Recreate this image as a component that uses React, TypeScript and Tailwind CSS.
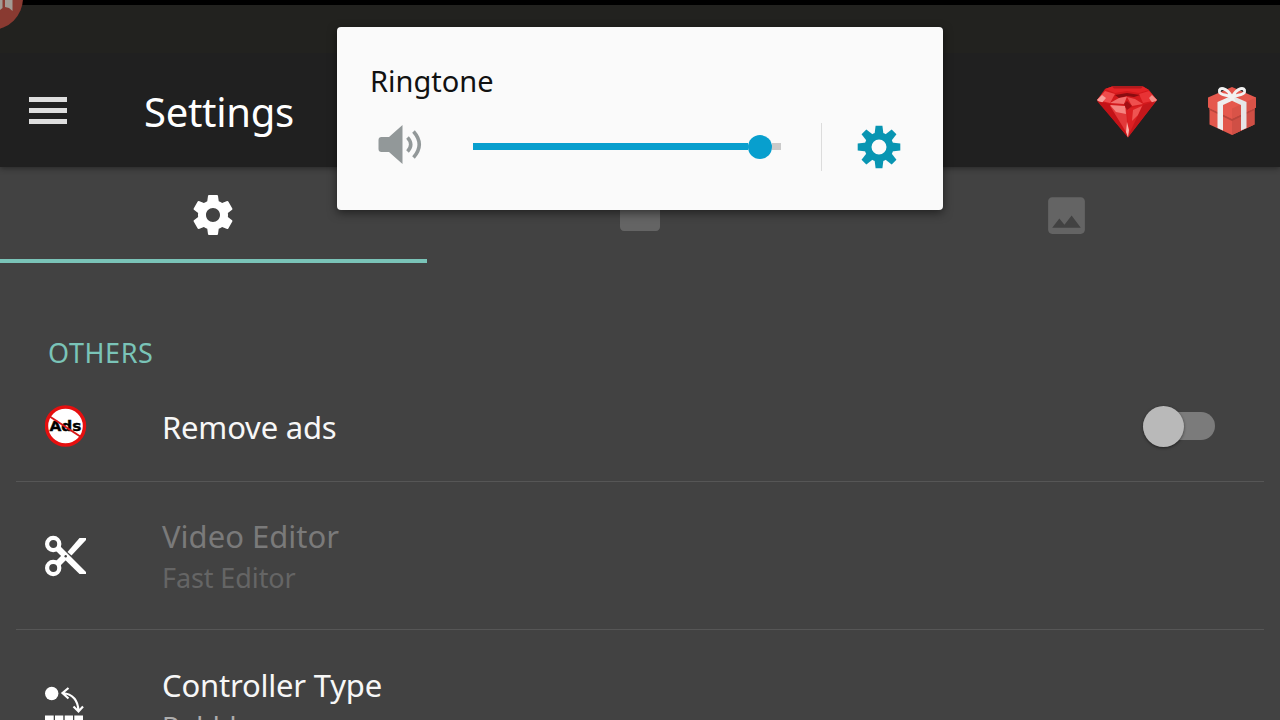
import { FC, ReactNode } from "react";
import { MdFolder, MdImage } from "react-icons/md";

const RubyIcon: FC = () => (
  <svg width="60" height="52" viewBox="0 0 60 52">
    <path d="M8 3 15 0.500H46L52 4 60 14 31 51.500 0 14Z" fill="#d3191c" />
    <path d="M8 3 15 0.500H46L52 4 42 7 30 5 18 7Z" fill="#e32326" />
    <path d="M15 0.500H46L44 2.500H17Z" fill="#b3191b" />
    <path d="M0 14 8 5 18 8 13 17Z" fill="#ef4c4c" />
    <path d="M0 14 5 9 9 12 4 18Z" fill="#f7a09b" />
    <path d="M60 14 52 5 42 8 46 17Z" fill="#e83335" />
    <path d="M60 14 55 9 52 12 56 18Z" fill="#f58d88" />
    <path d="M18 9 30 7 43 9 37 11 30 10 22 12Z" fill="#8a0c10" />
    <path d="M13 17 22 12 30 10.500 27 18Z" fill="#f36e6c" />
    <path d="M30 11 38 13 46 18 35 20Z" fill="#ef4f4e" />
    <path d="M0 15 13 18 31 51Z" fill="#c31217" />
    <path d="M13 20 29 22 31 49Z" fill="#e2393a" />
    <path d="M13 19 28 20 29 28 19 26Z" fill="#f58480" />
    <path d="M30 23 46 19 31 50Z" fill="#dc2023" />
    <path d="M36 24 45 20 41 29 35 35Z" fill="#ef5452" />
    <path d="M46 19 59 15 31 51Z" fill="#c4171b" />
    <path d="M27 18 30 15 35 20 30 24Z" fill="#a20e13" />
    <path d="M30 36 32 44 31 51.500 29 46Z" fill="#fcb2aa" />
  </svg>
);

const GiftIcon: FC = () => (
  <svg width="48" height="50" viewBox="0 0 48 50">
    <path d="M1.500 18H46.500V38.500L24 49 1.500 38.500Z" fill="#e2574c" />
    <path d="M24 30 46.500 19V38.500L24 49Z" fill="#cf4f45" />
    <path d="M1.500 22 24 33 46.500 22V24L24 35 1.500 24Z" fill="#b9453c" />
    <path d="M24 1 48 11.500V21.500L24 32.500 0 21.500V11.500Z" fill="#e5584d" />
    <path d="M24 22.500 48 11.500V21.500L24 32.500Z" fill="#d95348" />
    <path d="M9.500 16 23 10 29 12.500 15 19V44.500L9.500 42Z" fill="#eeeeee" />
    <path d="M38.500 16 25 10 19 12.500 33 19V44.500L38.500 42Z" fill="#e6e6e6" />
    <path
      d="M24 11.500C19 1 10.500 0.500 11.500 6 12.500 10 19 8 24 11.500ZM24 11.500C29 1 37.500 0.500 36.500 6 35.500 10 29 8 24 11.500Z"
      fill="none"
      stroke="#f2f2f2"
      strokeWidth="3"
    />
  </svg>
);

const NoAdsIcon: FC = () => (
  <svg width="42" height="42" viewBox="0 0 42 42">
    <circle cx="20.500" cy="21" r="19" fill="#fff" stroke="#e60f0f" strokeWidth="3.400" />
    <text
      x="20.500"
      y="26"
      textAnchor="middle"
      textLength="32"
      lengthAdjust="spacingAndGlyphs"
      fontSize="14"
      fontWeight="bold"
      fontFamily="'DejaVu Sans', sans-serif"
      fill="#000"
      stroke="#000"
      strokeWidth="0.400"
    >
      Ads
    </text>
    <path d="M4 11 36 32" stroke="#d81616" strokeWidth="2" />
  </svg>
);

const ScissorsIcon: FC = () => (
  <svg width="42" height="42" viewBox="0 0 42 42" fill="#fff">
    <g fill="none" stroke="#fff" strokeWidth="4.200">
      <circle cx="8.200" cy="9" r="6.100" />
      <circle cx="8.200" cy="33" r="6.100" />
    </g>
    <path d="M10.500 15.500 15 11 41 37V39H34.500Z" />
    <path d="M10.500 26.500 17.500 19.500 22 24 15 31Z" />
    <path d="M22.500 17 34.500 3H41V5L26.500 20.500Z" />
    <circle cx="20.700" cy="21.200" r="1.200" fill="#424242" />
  </svg>
);

const ControllerIcon: FC = () => (
  <svg width="40" height="48" viewBox="0 0 40 48">
    <circle cx="6.700" cy="7.500" r="6.700" fill="#fff" />
    <path
      d="M17.500 7C27 8 33 14 33.500 25M23.500 2 17.500 7 23.500 12.500M28.500 20.500 33.500 25.500 38 20.500"
      fill="none"
      stroke="#fff"
      strokeWidth="2.200"
    />
    <path d="M0 29.500H8.700V40H0ZM10 29.500H18.300V40H10ZM19.700 29.500H28V40H19.700ZM29.300 29.500H38V40H29.300Z" fill="#fff" />
  </svg>
);

const SpeakerIcon: FC = () => (
  <svg width="44" height="40" viewBox="0 0 44 40">
    <path d="M3.500 12H11L24.500 0V39L11 27H3.500Q0.500 27 0.500 24V15Q0.500 12 3.500 12Z" fill="#929899" />
    <path
      d="M29.500 12.500Q36 19.500 29.500 26.500M35.500 6.500Q47 19.500 35.500 32.500"
      fill="none"
      stroke="#929899"
      strokeWidth="3.500"
    />
  </svg>
);

const SettingsIcon: FC = () => (
  <svg width="48" height="48" viewBox="0 0 24 24" fill="currentColor">
    <path d="M19.43 12.98c.04-.32.07-.64.07-.98s-.03-.66-.07-.98l2.110-1.650c.19-.15.24-.42.12-.64l-2-3.460c-.12-.22-.39-.3-.61-.22l-2.490 1c-.52-.4-1.080-.73-1.690-.98l-.38-2.650C14.460 2.180 14.250 2 14 2h-4c-.25 0-.46.18-.49.42l-.38 2.650c-.61.25-1.170.59-1.690.98l-2.490-1c-.23-.09-.49 0-.61.22l-2 3.460c-.13.22-.07.49.12.64l2.110 1.650c-.04.32-.07.65-.07.98s.03.66.07.98l-2.110 1.650c-.19.15-.24.42-.12.64l2 3.460c.12.22.39.3.61.22l2.490-1c.52.4 1.080.73 1.690.98l.38 2.650c.03.24.24.42.49.42h4c.25 0 .46-.18.49-.42l.38-2.650c.61-.25 1.170-.59 1.690-.98l2.490 1c.23.09.49 0 .61-.22l2-3.460c.12-.22.07-.49-.12-.64l-2.110-1.650zM12 15.500c-1.930 0-3.500-1.570-3.500-3.500s1.570-3.500 3.500-3.500 3.500 1.570 3.500 3.500-1.570 3.500-3.500 3.500z" />
  </svg>
);

const teeth = [0, 45, 90, 135, 180, 225, 270, 315];

const CogIcon: FC = () => (
  <svg width="44" height="44" viewBox="-22 -22 44 44" fill="#0895b2">
    <circle r="11" fill="none" stroke="#0895b2" strokeWidth="7" />
    {teeth.map((angle) => (
      <path key={angle} d="M-4.500 -12.500 -3.400 -21.300H3.400L4.500 -12.500Z" transform={`rotate(${angle})`} />
    ))}
  </svg>
);

const Header: FC = () => (
  <header className="relative z-10 h-[167px] border-t-5 border-black bg-[linear-gradient(#22221f_48px,#202020_48px)] shadow-[0_1px_6px_rgba(0,0,0,0.45)]">
    {/* floating record button, mostly off screen */}
    <div className="absolute -top-[39px] -left-[41px] size-16 rounded-full bg-[#893a31]" />
    <svg className="absolute -top-[5px] left-0" width="16" height="12" viewBox="0 0 16 12">
      <path d="M0 0H2.500V8L0 10ZM5 0H12.500V11L9 8 5 7Z" fill="#a29b94" />
    </svg>
    <div className="flex h-full items-center pt-[50px] pr-6 pl-[29px]">
      <div className="-mt-px flex w-[38px] flex-col gap-[6px]">
        <span className="h-[5px] bg-[#dedede]" />
        <span className="h-[5px] bg-[#dedede]" />
        <span className="h-[5px] bg-[#dedede]" />
      </div>
      <h1 className="mt-px ml-[77px] text-[40px] leading-none tracking-[-0.3px] text-white">Settings</h1>
      <div className="ml-auto flex items-center gap-[51px]">
        <div className="mt-[2px]">
          <RubyIcon />
        </div>
        <GiftIcon />
      </div>
    </div>
  </header>
);

const Tabs: FC = () => (
  <nav className="grid h-24 grid-cols-3 text-[#646464]">
    <div className="flex items-center justify-center border-b-4 border-[#7ac4b8] pt-1 text-white">
      <SettingsIcon />
    </div>
    <div className="flex items-center justify-center">
      <MdFolder size={48} />
    </div>
    <div className="flex items-center justify-center">
      <MdImage size={49} />
    </div>
  </nav>
);

const Row: FC<{ icon: ReactNode; className: string; children: ReactNode }> = ({ icon, className, children }) => (
  <div className={`mx-4 flex items-center border-[#565656] pl-[29px] ${className}`}>
    <div className="flex w-[117px] shrink-0 items-center">{icon}</div>
    {children}
  </div>
);

const VolumeDialog: FC = () => (
  <section className="absolute top-[27px] left-[337px] z-20 h-[183px] w-[606px] rounded-[4px] bg-[#fafafa] px-[33px] pt-[35px] shadow-[0_3px_10px_rgba(0,0,0,0.5)]">
    <h2 className="text-[29px] leading-[38px] text-[#111]">Ringtone</h2>
    <div className="mt-[23px] flex h-12 items-center pl-2">
      <div className="-mt-1">
        <SpeakerIcon />
      </div>
      <div className="-mt-px ml-[51px] flex w-[308px] items-center">
        <div className="h-[7px] w-[275px] bg-[#089fce]" />
        <div className="size-6 shrink-0 rounded-full bg-[#089fce]" />
        <div className="h-[7px] flex-1 bg-[#cacaca]" />
      </div>
      <div className="ml-10 h-12 w-px bg-[#dcdcdc]" />
      <div className="-mt-px ml-[35px]">
        <CogIcon />
      </div>
    </div>
  </section>
);

const App: FC = () => (
  <main className="relative h-[720px] w-[1280px] overflow-hidden bg-[#424242] font-['Noto_Sans',sans-serif]">
    <Header />
    <Tabs />
    <div className="h-[107px] pt-[72px] pl-12">
      <h3 className="text-[27px] leading-9 tracking-[0.6px] text-[#7ac4b8]">OTHERS</h3>
    </div>
    <Row className="h-[112px] border-b" icon={<NoAdsIcon />}>
      <span className="mt-[3px] text-[31px] tracking-[-0.2px] text-[#f7f7f7]">Remove ads</span>
      <div className="mt-px mr-[49px] ml-auto flex h-[28px] w-[72px] items-center rounded-full bg-[#7b7b7b]">
        <span className="size-[41px] shrink-0 rounded-full bg-[#b9b9b9] shadow-[0_1px_3px_rgba(0,0,0,0.5)]" />
      </div>
    </Row>
    <Row className="h-[148px] border-b" icon={<ScissorsIcon />}>
      <div className="mt-px flex flex-col">
        <span className="text-[31px] leading-[43px] text-[#7a7a7a]">Video Editor</span>
        <span className="text-[27px] leading-[39px] tracking-[-0.1px] text-[#656565]">Fast Editor</span>
      </div>
    </Row>
    <Row
      className="h-[148px]"
      icon={
        <div className="mt-[11px]">
          <ControllerIcon />
        </div>
      }
    >
      <div className="mt-px flex flex-col">
        <span className="text-[31px] leading-[43px] tracking-[-0.2px] text-[#f7f7f7]">Controller Type</span>
        <span className="text-[27px] leading-[39px] text-[#adadad]">Bubble</span>
      </div>
    </Row>
    <VolumeDialog />
  </main>
);

export default App;
